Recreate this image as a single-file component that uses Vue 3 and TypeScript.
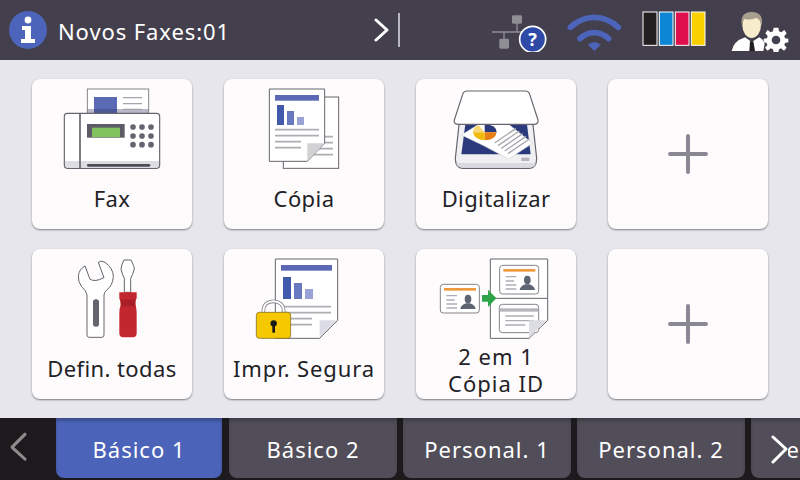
<script setup lang="ts">
const tabs = ['Básico 1', 'Básico 2', 'Personal. 1', 'Personal. 2', 'Personal. 3']
</script>

<template>
  <div class="screen">
    <header class="topbar">
      <svg class="info" width="40" height="40" viewBox="0 0 40 40">
        <circle cx="20" cy="20" r="19" fill="#4c64b9" />
        <circle cx="20" cy="10" r="3.4" fill="#fff" />
        <path d="M14 16h9v13h4v4H13v-4h4v-9h-3z" fill="#fff" />
      </svg>
      <span class="message">Novos Faxes:01</span>
      <svg class="chevron" width="16" height="26" viewBox="0 0 16 26">
        <path d="M2 3l11 10L2 23" fill="none" stroke="#fff" stroke-width="3" stroke-linecap="round" stroke-linejoin="round" />
      </svg>
      <span class="divider"></span>

      <!-- network, not connected -->
      <svg class="status network" width="58" height="44" viewBox="60 18 174 132">
        <rect x="126" y="40" width="30" height="25" rx="4" fill="#8f8e94" />
        <path d="M141 62v28M66 90h90M102 90v24" stroke="#8f8e94" stroke-width="4" fill="none" />
        <rect x="88" y="110" width="29" height="30" rx="4" fill="#8f8e94" />
        <circle cx="188" cy="112" r="39" fill="#2f49a6" stroke="#fff" stroke-width="5" />
        <text x="188" y="132" class="help">?</text>
      </svg>

      <svg class="status wifi" width="56" height="44" viewBox="284 18 168 132">
        <path d="M297 76C340 36 398 36 441 76" fill="none" stroke="#4c64b9" stroke-width="17" stroke-linecap="round" />
        <path d="M326 110C352 86 386 86 412 110" fill="none" stroke="#4c64b9" stroke-width="17" stroke-linecap="round" />
        <path d="M350 128Q369 114 388 128L369 147z" fill="#4c64b9" />
      </svg>

      <svg class="status ink" width="64" height="38" viewBox="517 37 190 114">
        <rect x="519" y="40" width="42" height="100" fill="#231f20" stroke="#fff" stroke-width="3" />
        <rect x="568" y="40" width="41" height="100" fill="#0d86d6" stroke="#fff" stroke-width="3" />
        <rect x="616" y="40" width="41" height="100" fill="#e0104e" stroke="#fff" stroke-width="3" />
        <rect x="664" y="40" width="41" height="100" fill="#fbd000" stroke="#fff" stroke-width="3" />
      </svg>

      <svg class="status admin" width="62" height="44" viewBox="780 18 186 132">
        <path d="M785 147Q790 118 825 106L845 120L868 106Q880 112 884 125L880 147z" fill="#fff" />
        <ellipse cx="845" cy="70" rx="28" ry="38" fill="#f7eccb" />
        <path d="M816 72Q808 30 845 30Q882 30 875 72Q872 52 858 48Q838 56 822 50Q818 58 816 72z" fill="#a89f8e" />
        <path d="M840 118h10l5 29h-17z" fill="#231f20" />
        <g transform="translate(918 113)" fill="#fff">
          <path d="M-7-36H7L9-25 16-22 25-29 32-19 25-11 27-4 37-3V8L27 10 25 16 32 24 24 33 15 26 9 29 7 38H-7L-9 29-16 26-25 33-33 24-26 16-28 10-37 8V-3L-27-4-25-11-32-19-25-29-16-22-9-25z" />
          <circle cy="1" r="13" fill="#433f4c" />
        </g>
      </svg>
    </header>

    <main class="launcher">
      <button class="card">
        <svg class="icon" viewBox="6 12 480 288">
          <rect x="172" y="42" width="184" height="80" fill="#fff" stroke="#85838b" stroke-width="3" />
          <rect x="192" y="66" width="69" height="49" fill="#5a6ab4" />
          <rect x="173" y="102" width="182" height="13" fill="#33335c" opacity=".35" />
          <path d="M279 68h57M279 86h57M279 103h57" stroke="#a5a4aa" stroke-width="4" />
          <rect x="103" y="115" width="286" height="165" rx="9" fill="#fff" stroke="#66646e" stroke-width="3.5" />
          <path d="M105 258h282v13q0 7-7 7H112q-7 0-7-7z" fill="#dddde3" />
          <path d="M150 116v163" stroke="#66646e" stroke-width="5" />
          <rect x="171" y="147" width="113" height="41" fill="#5d5b66" />
          <rect x="186" y="158" width="84" height="28" fill="#80c35f" />
          <g fill="#66646e">
            <circle cx="309" cy="156" r="8.5" /><circle cx="336" cy="156" r="8.5" /><circle cx="363" cy="156" r="8.5" />
            <circle cx="309" cy="183" r="8.5" /><circle cx="336" cy="183" r="8.5" /><circle cx="363" cy="183" r="8.5" />
            <circle cx="309" cy="209" r="8.5" /><circle cx="336" cy="209" r="8.5" /><circle cx="363" cy="209" r="8.5" />
          </g>
          <rect x="171" y="267" width="190" height="8" rx="4" fill="#4f4d58" />
        </svg>
        <span class="label">Fax</span>
      </button>

      <button class="card">
        <svg class="icon" viewBox="12 12 480 288">
          <rect x="190" y="66" width="166" height="214" fill="#fff" stroke="#66646e" stroke-width="3" />
          <path d="M314 185h25M311 203h28M296 221h43M278 239h61" stroke="#aeadb3" stroke-width="5" />
          <path d="M148 42H314V205L262 259H148z" fill="#fff" stroke="#66646e" stroke-width="3" />
          <path d="M314 205H262V259z" fill="#d2d2d4" />
          <rect x="165" y="60" width="132" height="17" fill="#5a68b5" />
          <rect x="171" y="90" width="21" height="60" fill="#4259ad" />
          <rect x="201" y="108" width="21" height="42" fill="#6a78c0" />
          <rect x="231" y="126" width="21" height="24" fill="#9aa2d8" />
          <path d="M165 164H297M165 182H297M165 200H243M165 218H243" stroke="#aeadb3" stroke-width="5" />
        </svg>
        <span class="label">Cópia</span>
      </button>

      <button class="card">
        <svg class="icon" viewBox="12 12 480 288">
          <path d="M142 140L130 250Q130 280 152 280H352Q374 280 374 250L362 140z" fill="#f0f0f2" stroke="#66646e" stroke-width="3.5" />
          <path d="M133 264H371Q370 278 352 278H152Q134 278 133 264z" fill="#d9d9df" />
          <path d="M160 148H345L356 238H148z" fill="#2b3a7d" />
          <path d="M148 180L200 148H290L362 205L290 252L215 212z" fill="#fff" stroke="#c8c8ce" stroke-width="1.5" />
          <path d="M322 168L258 212M332 176L268 220M342 184L278 228M352 192L288 236M312 160L248 204" stroke="#a9a8ae" stroke-width="4" />
          <path d="M218 172V148Q254 150 254 172z" fill="#2b3a7d" />
          <path d="M218 172H254Q250 196 218 196z" fill="#e67e14" />
          <path d="M218 172V196Q190 196 182 172z" fill="#f2b90c" />
          <path d="M218 172H182Q184 156 200 151z" fill="#f7d774" />
          <rect x="328" y="248" width="24" height="10" fill="#b5b5bb" />
          <path d="M165 48H340Q350 48 353 58L378 135Q380 148 365 148H140Q124 148 127 135L152 58Q155 48 165 48z" fill="#fff" stroke="#66646e" stroke-width="3.5" />
        </svg>
        <span class="label">Digitalizar</span>
      </button>

      <button class="card">
        <svg class="plus" width="44" height="44" viewBox="0 0 44 44">
          <path d="M4 22h36M22 4v36" stroke="#8a8892" stroke-width="4" stroke-linecap="round" />
        </svg>
      </button>

      <button class="card">
        <svg class="icon" viewBox="6 12 480 288">
          <path d="M178 277Q171 277 171 270V150Q168 135 155 125Q144 112 145 92Q148 72 165 63L180 103Q195 112 222 98L205 52Q212 45 225 52Q250 70 250 95Q248 122 230 135Q222 142 222 150V270Q222 277 215 277z" fill="#fff" stroke="#66646e" stroke-width="3" stroke-linejoin="round" />
          <rect x="189" y="163" width="18" height="82" rx="8" fill="#66646e" />
          <path d="M282 45H303Q313 65 313 72Q308 90 302 100V142H283V100Q277 90 273 72Q274 60 282 45z" fill="#fff" stroke="#66646e" stroke-width="3" />
          <path d="M268 142H320V160Q314 170 318 185Q320 195 320 205V265Q320 277 308 277H280Q268 277 268 265V205Q268 190 272 180Q272 170 268 160z" fill="#c2262e" />
          <path d="M272 164H316L315 184H273z" fill="#a81f27" />
        </svg>
        <span class="label">Defin. todas</span>
      </button>

      <button class="card">
        <svg class="icon" viewBox="12 12 480 288">
          <path d="M166 42H353V226L299 280H166z" fill="#fff" stroke="#66646e" stroke-width="3" />
          <path d="M351 226H299V278z" fill="#dcdce4" />
          <rect x="183" y="60" width="153" height="17" fill="#5a68b5" />
          <rect x="189" y="96" width="24" height="66" fill="#4259ad" />
          <rect x="222" y="114" width="24" height="48" fill="#6a78c0" />
          <rect x="255" y="132" width="24" height="30" fill="#9aa2d8" />
          <path d="M183 185H333M183 203H333M183 221H276M183 239H276" stroke="#aeadb3" stroke-width="5" />
          <path d="M130 204V198C130 178 144 169 160 169C176 169 191 178 191 198V204" fill="none" stroke="#85838b" stroke-width="11" />
          <path d="M130 204V198C130 178 144 169 160 169C176 169 191 178 191 198V204" fill="none" stroke="#fff" stroke-width="6" />
          <rect x="109" y="202" width="103" height="78" rx="9" fill="#f5c800" stroke="#8a7520" stroke-width="2.5" />
          <circle cx="161" cy="235" r="9.5" fill="#1a1a1a" />
          <rect x="157" y="236" width="8" height="27" fill="#1a1a1a" />
        </svg>
        <span class="label wide">Impr. Segura</span>
      </button>

      <button class="card">
        <svg class="icon" viewBox="12 12 480 288">
          <defs>
            <g id="id-card">
              <rect x="0" y="0" width="117" height="86" rx="9" fill="#fff" stroke="#85838b" stroke-width="3" />
              <rect x="11" y="11" width="96" height="8" fill="#ee9b3f" />
              <path d="M18 34h32M18 47h25M18 59h32M18 71h32" stroke="#aeadb3" stroke-width="4" />
              <ellipse cx="83" cy="44" rx="10" ry="13" fill="#5d6472" />
              <path d="M60 74Q62 62 77 57H89Q104 62 106 74z" fill="#5d6472" />
            </g>
          </defs>
          <path d="M235 42H407V226L351 280H235z" fill="#fff" stroke="#66646e" stroke-width="3" />
          <path d="M235 160H407" stroke="#66646e" stroke-width="3" />
          <use href="#id-card" x="263" y="61" />
          <rect x="262" y="178" width="118" height="85" rx="9" fill="#fff" stroke="#85838b" stroke-width="3" />
          <rect x="263" y="190" width="116" height="10" fill="#b5b5bb" />
          <path d="M280 213H365M280 227H365M280 240H340" stroke="#aeadb3" stroke-width="4" />
          <path d="M405 226H351V278z" fill="#dcdce4" />
          <use href="#id-card" x="85" y="118" />
          <path d="M210 150H228V134L253 160L228 186V170H210z" fill="#2da44a" />
        </svg>
        <span class="label double">2 em 1<br />Cópia ID</span>
      </button>

      <button class="card">
        <svg class="plus" width="44" height="44" viewBox="0 0 44 44">
          <path d="M4 22h36M22 4v36" stroke="#8a8892" stroke-width="4" stroke-linecap="round" />
        </svg>
      </button>
    </main>

    <nav class="tabbar">
      <svg class="prev" width="56" height="62" viewBox="0 0 56 62">
        <path d="M25 16L12 28L25 39" transform="translate(0 -1) scale(1 1.08)" fill="none" stroke="#8d8b8b" stroke-width="3" stroke-linecap="round" stroke-linejoin="round" />
      </svg>
      <div
        v-for="(tab, i) in tabs"
        :key="tab"
        class="tab"
        :class="{ active: i === 0 }"
      >
        {{ tab }}
      </div>
      <div class="next">
        <svg width="18" height="30" viewBox="0 0 18 30">
          <path d="M3 3L16 15L3 28" fill="none" stroke="#fff" stroke-width="3" stroke-linecap="round" stroke-linejoin="round" />
        </svg>
      </div>
    </nav>
  </div>
</template>

<style>
html,
body {
  margin: 0;
  overflow: hidden;
}
</style>

<style scoped>
.screen {
  width: 800px;
  height: 480px;
  display: flex;
  flex-direction: column;
  background: #e6e6ec;
  font-family: "Noto Sans", "DejaVu Sans", sans-serif;
  overflow: hidden;
}

.topbar {
  flex: none;
  height: 60px;
  display: flex;
  align-items: center;
  padding-left: 8px;
  background: #433f4c;
  color: #fff;
}

.message {
  margin-left: 10px;
  padding-top: 2px;
  width: 316px;
  font-size: 22px;
  letter-spacing: 0.9px;
  white-space: nowrap;
}

.chevron {
  flex: none;
}

.divider {
  width: 2px;
  height: 34px;
  margin-left: 8px;
  background: #b8b8c0;
}

.status {
  flex: none;
  display: block;
}

.network {
  margin-left: 90px;
}

.wifi {
  margin-left: 18px;
}

.ink {
  margin-left: 20px;
}

.admin {
  margin-left: 24px;
}

.help {
  font-size: 54px;
  font-weight: 700;
  fill: #fff;
  text-anchor: middle;
}

.launcher {
  flex: none;
  height: 358px;
  box-sizing: border-box;
  padding: 19px 32px 0;
  display: grid;
  grid-template-columns: repeat(4, 160px);
  grid-auto-rows: 150px;
  gap: 20px 32px;
}

.card {
  display: flex;
  flex-direction: column;
  align-items: center;
  justify-content: center;
  padding: 0;
  border: none;
  border-radius: 8px;
  background: #fefbfd;
  box-shadow: 0 1px 2px rgba(0, 0, 0, 0.45);
  font: inherit;
}

.icon {
  flex: none;
  display: block;
  width: 160px;
  height: 96px;
}

.label {
  flex: none;
  height: 46px;
  margin-bottom: 8px;
  display: flex;
  align-items: center;
  text-align: center;
  font-size: 22px;
  line-height: 27px;
  letter-spacing: 0.4px;
  color: #222226;
}

.label.wide {
  letter-spacing: 0.9px;
}

.label.double {
  letter-spacing: 1px;
  margin-top: 2px;
  margin-bottom: 6px;
}

.tabbar {
  position: relative;
  flex: none;
  height: 62px;
  display: flex;
  background: #1c1a1c;
  overflow: hidden;
}

.prev {
  flex: none;
  display: block;
}

.tab {
  flex: none;
  width: 168px;
  height: 60px;
  margin-left: 6px;
  box-sizing: border-box;
  display: flex;
  align-items: center;
  justify-content: center;
  padding-top: 2px;
  border-radius: 0 0 8px 8px;
  background: #514e59;
  box-shadow: inset 0 3px 3px rgba(0, 0, 0, 0.22);
  color: #fff;
  font-size: 22px;
  letter-spacing: 1px;
  white-space: nowrap;
}

.tab.active {
  width: 166px;
  margin: 0 1px 0 0;
  background: #4b63b8;
}

.next {
  position: absolute;
  left: 770px;
  top: 14px;
  width: 18px;
  height: 34px;
  display: flex;
  align-items: center;
  background: #514e59;
}
</style>
